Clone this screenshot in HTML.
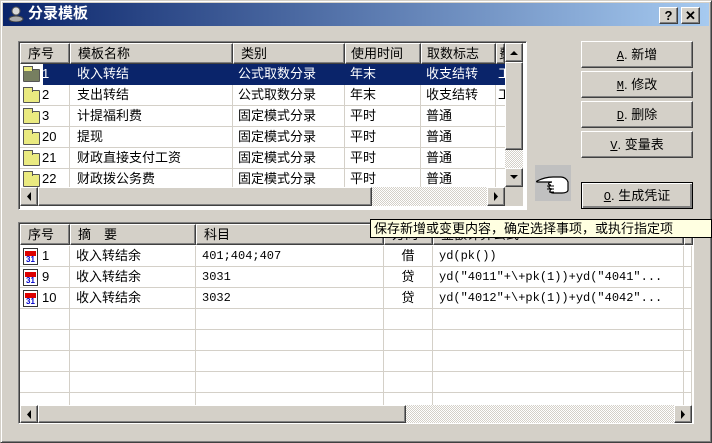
<!DOCTYPE html>
<html><head><meta charset="utf-8"><style>
*{box-sizing:border-box;margin:0;padding:0}
body{width:712px;height:443px;background:#d4d0c8;position:relative;overflow:hidden;font-family:"Liberation Sans","Noto Sans CJK SC",sans-serif;font-size:13px;color:#000}
.a{position:absolute}
.raised{background:#d4d0c8;border:1px solid;border-color:#fff #404040 #404040 #fff;box-shadow:inset -1px -1px #808080}
.sunk{border:1px solid;border-color:#808080 #fff #fff #808080;box-shadow:inset 1px 1px #404040}
.hd{position:absolute;height:21px;line-height:19px;padding-left:7px;white-space:nowrap;overflow:hidden;background:#d4d0c8;border:1px solid;border-color:#fff #404040 #404040 #fff;box-shadow:inset -1px -1px #808080;font-size:13px}
.c{position:absolute;height:21px;line-height:20px;white-space:nowrap;overflow:hidden;border-right:1px solid #d4d0c8;border-bottom:1px solid #d4d0c8;padding-left:6px}
.dots{background-color:#e8e6e2;background-image:repeating-conic-gradient(#d4d0c8 0 25%,#fff 0 50%);background-size:2px 2px}
.btn{position:absolute;left:581px;width:112px;height:27px;text-align:center;line-height:25px;font-size:13px}
.btn u{font-family:"Liberation Mono",monospace;font-size:12px}
.folder{position:absolute;width:17px;height:13px;background:#eaea80;border:1px solid #555;border-radius:1px}
.folder:before{content:"";position:absolute;left:-1px;top:-4px;width:8px;height:4px;background:#eaea80;border:1px solid #555;border-bottom:none}
.mono{font-family:"Liberation Mono","Noto Sans CJK SC",monospace;font-size:12px}
</style></head><body>
<div class="a" style="left:0;top:0;width:712px;height:443px;border:1px solid;border-color:#d4d0c8 #404040 #404040 #d4d0c8;box-shadow:inset 1px 1px #fff,inset -1px -1px #808080"></div>
<div class="a" style="left:3px;top:3px;width:706px;height:23px;background:linear-gradient(90deg,#0a246a,#a6caf0)"></div>
<div class="a" style="left:8px;top:6px;width:16px;height:16px">
<svg width="16" height="16"><circle cx="8" cy="5" r="4" fill="#d8d8d8" stroke="#555"/><ellipse cx="8" cy="13" rx="7" ry="3" fill="#aaa" stroke="#444"/></svg></div>
<div class="a" style="left:28px;top:4px;color:#fff;font-weight:bold;font-size:15px;line-height:19px">分录模板</div>
<div class="a raised" style="left:659px;top:7px;width:19px;height:17px;text-align:center;font-weight:bold;line-height:15px;font-size:13px">?</div>
<div class="a raised" style="left:681px;top:7px;width:19px;height:17px;text-align:center;font-weight:bold;line-height:15px;font-size:13px">✕</div>

<div class="a sunk" style="left:18px;top:41px;width:509px;height:169px;background:#fff"></div>
<div class="hd" style="left:20px;top:43px;width:50px">序号</div>
<div class="hd" style="left:70px;top:43px;width:163px">模板名称</div>
<div class="hd" style="left:233px;top:43px;width:112px">类别</div>
<div class="hd" style="left:345px;top:43px;width:76px;padding-left:5px">使用时间</div>
<div class="hd" style="left:421px;top:43px;width:75px;padding-left:5px">取数标志</div>
<div class="hd" style="left:496px;top:43px;width:9px;padding-left:2px">费</div>
<div class="a" style="left:20px;top:64px;width:485px;height:123px;overflow:hidden">
<div class="a" style="left:23px;top:0;width:462px;height:21px;background:#0a246a"></div>
<div class="folder" style="left:3px;top:5px;background:#777f60"></div>
<div class="c" style="left:20px;top:0;width:30px;color:#fff;padding-left:2px;border-color:transparent">1</div>
<div class="c" style="left:50px;top:0;width:163px;color:#fff;padding-left:7px;border-color:transparent">收入转结</div>
<div class="c" style="left:213px;top:0;width:112px;color:#fff;padding-left:5px;border-color:transparent">公式取数分录</div>
<div class="c" style="left:325px;top:0;width:76px;color:#fff;padding-left:5px;border-color:transparent">年末</div>
<div class="c" style="left:401px;top:0;width:75px;color:#fff;padding-left:5px;border-color:transparent">收支结转</div>
<div class="c" style="left:476px;top:0;width:10px;color:#fff;padding-left:2px;border-color:transparent">工</div>
</div>
<div class="a" style="left:20px;top:85px;width:485px;height:102px;overflow:hidden" id="tr"></div>

<div class="a dots" style="left:505px;top:43px;width:18px;height:144px"></div>
<div class="a raised" style="left:505px;top:43px;width:18px;height:19px"><svg width="16" height="17"><path d="M4 11h8L8 7z" fill="#000"/></svg></div>
<div class="a raised" style="left:505px;top:62px;width:18px;height:88px"></div>
<div class="a raised" style="left:505px;top:168px;width:18px;height:19px"><svg width="16" height="17"><path d="M4 6h8L8 10z" fill="#000"/></svg></div>
<div class="a dots" style="left:20px;top:187px;width:485px;height:19px"></div>
<div class="a raised" style="left:20px;top:187px;width:18px;height:19px"><svg width="16" height="17"><path d="M10 4v9L6 8.5z" fill="#000"/></svg></div>
<div class="a raised" style="left:38px;top:187px;width:334px;height:19px"></div>
<div class="a raised" style="left:487px;top:187px;width:18px;height:19px"><svg width="16" height="17"><path d="M6 4v9l4-4.5z" fill="#000"/></svg></div>
<div class="a" style="left:505px;top:187px;width:18px;height:19px;background:#d4d0c8"></div>

<div class="btn raised" style="top:41px"><u>A</u>. 新增</div>
<div class="btn raised" style="top:71px"><u>M</u>. 修改</div>
<div class="btn raised" style="top:101px"><u>D</u>. 删除</div>
<div class="btn raised" style="top:131px"><u>V</u>. 变量表</div>
<div class="btn raised" style="top:182px;border:1px solid #000;box-shadow:inset 1px 1px #fff,inset -2px -2px #808080"><u>O</u>. 生成凭证</div>
<div class="a" style="left:535px;top:165px;width:36px;height:36px;background:#c0c0c0">
<svg width="36" height="36"><path d="M2 16c4-2 10-4 16-4h8c3 0 6 2 7 5v8c0 2-3 3-6 3h-9c-2 0-3-1-3-2s1-2 2-2c-2 0-3-1-3-2s1-2 2-2c-2 0-3-1-2-2 1-1 2-1 3-1H4c-2 0-3 0-2-1z" fill="#fff" stroke="#000" stroke-width="1.2"/><path d="M12 21h7M12 24h7M14 27h5" stroke="#000"/></svg></div>

<div class="a sunk" style="left:18px;top:222px;width:676px;height:202px;background:#fff"></div>
<div class="hd" style="left:20px;top:224px;width:50px">序号</div>
<div class="hd" style="left:70px;top:224px;width:126px">摘　要</div>
<div class="hd" style="left:196px;top:224px;width:188px">科目</div>
<div class="hd" style="left:384px;top:224px;width:49px">方向</div>
<div class="hd" style="left:433px;top:224px;width:251px">金额计算公式</div>
<div class="hd" style="left:684px;top:224px;width:8px"></div>
<div class="a" id="br" style="left:20px;top:246px;width:672px;height:159px;overflow:hidden"></div>
<div class="a dots" style="left:20px;top:405px;width:672px;height:18px"></div>
<div class="a raised" style="left:20px;top:405px;width:18px;height:18px"><svg width="16" height="16"><path d="M10 4v9L6 8.5z" fill="#000"/></svg></div>
<div class="a raised" style="left:38px;top:405px;width:368px;height:18px"></div>
<div class="a raised" style="left:674px;top:405px;width:18px;height:18px"><svg width="16" height="16"><path d="M6 4v9l4-4.5z" fill="#000"/></svg></div>

<div class="a" style="left:370px;top:219px;width:342px;height:19px;background:#ffffe1;border:1px solid #000;line-height:17px;padding-left:3px;white-space:nowrap;overflow:hidden;font-size:13px">保存新增或变更内容，确定选择事项，或执行指定项</div>

<script>
var tr=document.getElementById('tr'),h='';
var rows=[['2','支出转结','公式取数分录','年末','收支结转','工'],['3','计提福利费','固定模式分录','平时','普通',''],['20','提现','固定模式分录','平时','普通',''],['21','财政直接支付工资','固定模式分录','平时','普通',''],['22','财政拨公务费','固定模式分录','平时','普通','']];
var cx=[[0,50,22],[50,163,7],[213,112,5],[325,76,5],[401,75,5],[476,10,2]];
rows.forEach(function(r,i){var t=i*21;
r.forEach(function(v,j){h+='<div class="c" style="left:'+cx[j][0]+'px;top:'+t+'px;width:'+cx[j][1]+'px;padding-left:'+cx[j][2]+'px">'+v+'</div>';});
h+='<div class="folder" style="left:3px;top:'+(t+5)+'px"></div>';});
tr.innerHTML=h;
var br=document.getElementById('br');h='';
var b=[['1','收入转结余','401;404;407','借','yd(pk())'],['9','收入转结余','3031','贷','yd("4011"+\\+pk(1))+yd("4041"...'],['10','收入转结余','3032','贷','yd("4012"+\\+pk(1))+yd("4042"...'],['','','','',''],['','','','',''],['','','','',''],['','','','',''],['','','','','']];
var bx=[[0,50],[50,126],[176,188],[364,49],[413,251],[664,8]];
b.forEach(function(r,i){var t=i*21;
bx.forEach(function(c,j){var v=r[j]||'';var cls='c'+(j==2||j==4?' mono':'');var st=j==3?'text-align:center;padding-left:0;':'';if(j==0)st='padding-left:22px;';h+='<div class="'+cls+'" style="'+st+'left:'+c[0]+'px;top:'+t+'px;width:'+c[1]+'px">'+v+'</div>';});
if(r[0])h+='<div class="a" style="left:3px;top:'+(t+2)+'px;width:15px;height:17px;border:1px solid #333;background:#fff"><div style="height:5px;background:#d00;margin:2px 1px 0"></div><div style="font:bold 8px Liberation Sans;color:#00c;text-align:center;line-height:8px">31</div></div>';});
br.innerHTML=h;
</script>
</body></html>
